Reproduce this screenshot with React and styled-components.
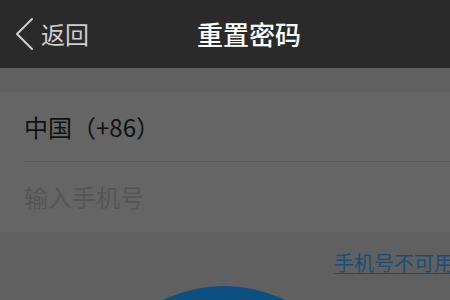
import React from 'react';
import styled, { createGlobalStyle } from 'styled-components';

const GlobalStyle = createGlobalStyle`
  html, body {
    margin: 0;
    padding: 0;
    background: #606060;
  }
  body {
    font-family: "Noto Sans CJK SC", "Noto Sans", sans-serif;
  }
`;

const Screen = styled.div`
  width: 450px;
  height: 300px;
  overflow: hidden;
  background: #606060;
  display: flex;
  flex-direction: column;
`;

const NavBar = styled.div`
  height: 68px;
  flex-shrink: 0;
  background: #2a2a2a;
  display: grid;
  grid-template-columns: 197px auto 1fr;
  align-items: center;
`;

const BackButton = styled.div`
  display: flex;
  align-items: center;
  gap: 7px;
  padding-left: 14px;
  color: #cfcfcf;
  font-size: 24px;
  line-height: 1;
`;

const Title = styled.div`
  color: #ffffff;
  font-size: 26px;
  font-weight: 500;
  line-height: 1;
`;

const Card = styled.div`
  margin-top: 24px;
  background: #656565;
  display: flex;
  flex-direction: column;
`;

const Row = styled.div`
  height: ${(p) => p.$height}px;
  display: flex;
  align-items: center;
  padding-left: 24px;
  font-size: 24px;
  line-height: 1;
  color: ${(p) => (p.$placeholder ? '#555555' : '#111111')};
`;

const Divider = styled.div`
  height: 1px;
  margin-left: 24px;
  background: #5a5a5a;
`;

const LinkRow = styled.div`
  display: flex;
  padding-left: 334px;
  margin-top: 20px;
  white-space: nowrap;
`;

const HelpLink = styled.a`
  color: #1a4d78;
  font-size: 20px;
  line-height: 22px;
  text-decoration: underline;
  text-decoration-thickness: 1px;
  text-underline-offset: 2px;
`;

const ButtonWrap = styled.div`
  display: flex;
  justify-content: center;
  margin-top: 12px;
  padding-right: 2px;
`;

const RoundButton = styled.div`
  width: 280px;
  height: 280px;
  flex-shrink: 0;
  border-radius: 50%;
  background: #0b5080;
`;

const Chevron = () => (
  <svg width="20" height="34" viewBox="0 0 20 34" fill="none">
    <path d="M18 2 L3 17 L18 32" stroke="#cfcfcf" strokeWidth="2" strokeLinecap="round" strokeLinejoin="round" />
  </svg>
);

const App = () => {
  return (
    <Screen>
      <GlobalStyle />
      <NavBar>
        <BackButton>
          <Chevron />
          <span>返回</span>
        </BackButton>
        <Title>重置密码</Title>
        <div />
      </NavBar>
      <Card>
        <Row $height={69}>中国（+86）</Row>
        <Divider />
        <Row $height={70} $placeholder>输入手机号</Row>
      </Card>
      <LinkRow>
        <HelpLink>手机号不可用？</HelpLink>
      </LinkRow>
      <ButtonWrap>
        <RoundButton />
      </ButtonWrap>
    </Screen>
  );
};

export default App;
